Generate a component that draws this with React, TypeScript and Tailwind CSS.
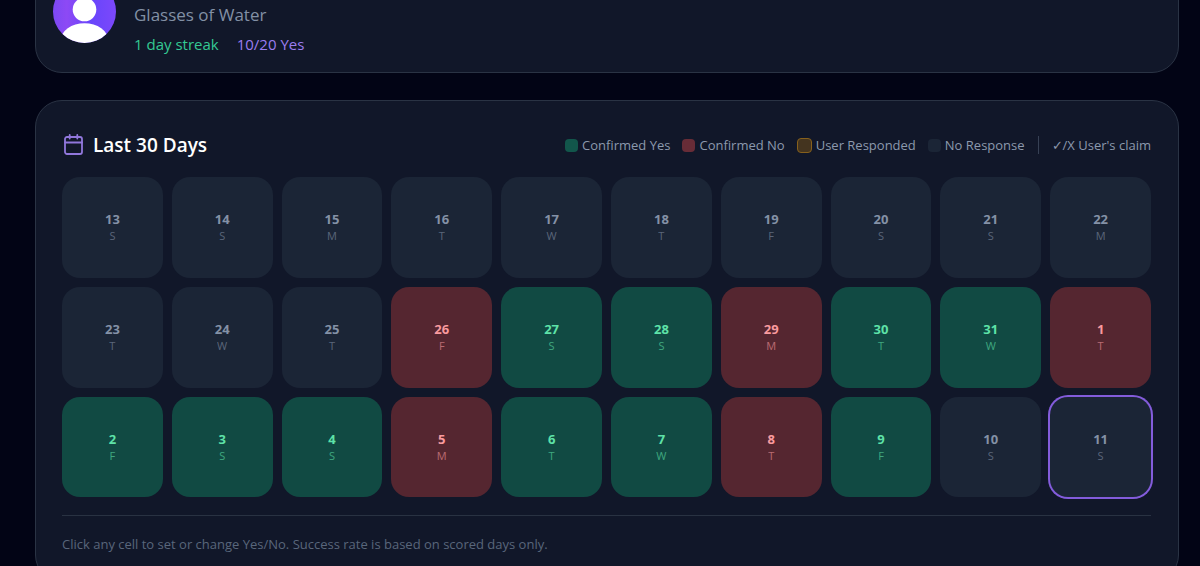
type Status = "yes" | "no" | "none";

interface Day {
  date: number;
  weekday: string;
  status: Status;
  today?: boolean;
}

const dates = [13, 14, 15, 16, 17, 18, 19, 20, 21, 22, 23, 24, 25, 26, 27, 28, 29, 30, 31, 1, 2, 3, 4, 5, 6, 7, 8, 9, 10, 11];
const weekdays = "SSMTWTF";
const statuses = "-------------NYYNYYNYYYNYYNY--";

const days: Day[] = dates.map((date, i) => ({
  date,
  weekday: weekdays[i % 7],
  status: statuses[i] === "Y" ? "yes" : statuses[i] === "N" ? "no" : "none",
  today: i === dates.length - 1,
}));

const cellStyles: Record<Status, string> = {
  yes: "bg-[#114a43] text-[#5ee2a8]",
  no: "bg-[#552630] text-[#f99a9e]",
  none: "bg-[#1b2536] text-[#8491a6]",
};

const legend = [
  { label: "Confirmed Yes", swatch: "size-[13px] bg-[#12564b]" },
  { label: "Confirmed No", swatch: "size-[13px] bg-[#682c37]" },
  { label: "User Responded", swatch: "size-[15px] border border-[#86601c] bg-[#44341f]" },
  { label: "No Response", swatch: "size-[13px] bg-[#1b2536]" },
];

function Avatar() {
  return (
    <svg viewBox="0 0 64 64" className="size-[63px] shrink-0" role="img" aria-label="Profile">
      <defs>
        <linearGradient id="avatar-fill" x1="0" y1="0" x2="1" y2="0">
          <stop offset="0" stopColor="#7c48f4" />
          <stop offset="0.22" stopColor="#8d49f5" />
          <stop offset="0.6" stopColor="#6845fb" />
          <stop offset="1" stopColor="#7c48fb" />
        </linearGradient>
        <clipPath id="avatar-clip">
          <circle cx="32" cy="32" r="32" />
        </clipPath>
      </defs>
      <g clipPath="url(#avatar-clip)">
        <rect width="64" height="64" fill="url(#avatar-fill)" />
        <circle cx="32" cy="30" r="12" fill="#fff" />
        <ellipse cx="32" cy="61" rx="24" ry="17" fill="#fff" />
      </g>
    </svg>
  );
}

function CalendarIcon() {
  return (
    <svg viewBox="0 0 22 22" className="size-[22px]" fill="none" stroke="#9177dc" strokeWidth="1.800" strokeLinecap="round" strokeLinejoin="round" aria-hidden="true">
      <rect x="3" y="3" width="17" height="17" rx="2" />
      <path d="M3 8.500h17M7.700 1v3.600M15.300 1v3.600" />
    </svg>
  );
}

function DayCell({ day }: { day: Day }) {
  return (
    <button
      type="button"
      className={`flex aspect-square flex-col items-center justify-center rounded-[18px] ${cellStyles[day.status]} ${day.today ? "ring-2 ring-[#835cdb]" : ""}`}
    >
      <span className="text-[13px] leading-[18px] font-bold">{day.date}</span>
      <span className="text-[11px] leading-4 font-medium opacity-60">{day.weekday}</span>
    </button>
  );
}

export default function App() {
  return (
    <div className="h-screen overflow-hidden bg-[#020415] font-['Open_Sans','Noto_Sans',sans-serif]">
      <main className="-mt-[50px] flex flex-col gap-[27px] pr-[21px] pl-[35px]">
        <section className="flex items-center gap-[18px] rounded-[27px] border border-[#2a3344] bg-[#111729] p-[17px]">
          <Avatar />
          <div className="pt-[33px]">
            <p className="text-[17px] leading-7 text-[#8290a5]">Glasses of Water</p>
            <p className="flex gap-[18px] pt-1 text-[15px] leading-[22px]">
              <span className="text-[#34c993]">1 day streak</span>
              <span className="text-[#9b7df0]">10/20 Yes</span>
            </p>
          </div>
        </section>

        <section className="rounded-[27px] border border-[#2a3344] bg-[#111729] py-[26px] pr-[27px] pl-[26px]">
          <header className="flex items-center justify-between pt-1 pb-[18px]">
            <h2 className="flex items-center gap-[9px] text-[19px] leading-7 font-semibold text-white">
              <CalendarIcon />
              Last 30 Days
            </h2>
            <div className="flex items-center gap-[13px] text-[13px] leading-5 text-[#8c99ad]">
              <ul className="flex items-center gap-3">
                {legend.map((item) => (
                  <li key={item.label} className="flex items-center gap-1">
                    <span className={`rounded-[4px] ${item.swatch}`} />
                    {item.label}
                  </li>
                ))}
              </ul>
              <span className="h-[18px] w-px bg-[#374155]" />
              <span>✓/X User's claim</span>
            </div>
          </header>

          <div className="grid grid-cols-10 gap-[9px]">
            {days.map((day, i) => (
              <DayCell key={i} day={day} />
            ))}
          </div>

          <p className="mt-[18px] border-t border-[#293242] pt-[17px] text-[13px] leading-[22px] text-[#59667b]">
            Click any cell to set or change Yes/No. Success rate is based on scored days only.
          </p>
        </section>
      </main>
    </div>
  );
}
